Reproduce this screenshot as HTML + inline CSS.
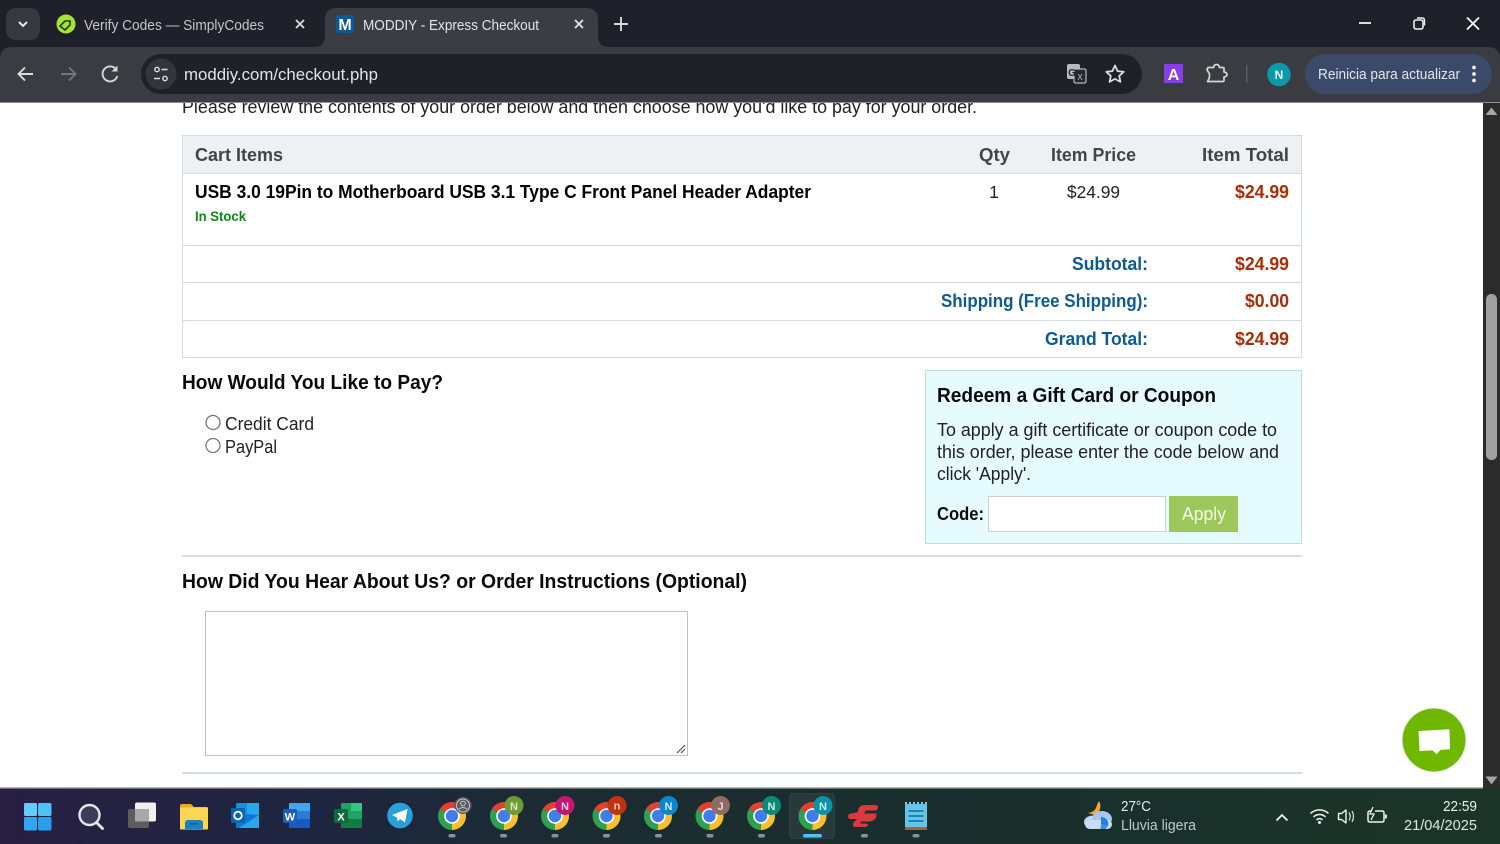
<!DOCTYPE html>
<html lang="en"><head><meta charset="utf-8"><title>MODDIY - Express Checkout</title>
<style>
html,body{margin:0;padding:0;width:1500px;height:844px;overflow:hidden;background:#fff}
svg{display:block;position:absolute;left:0;top:0}
text{font-family:"Liberation Sans","DejaVu Sans",sans-serif}
.s{font-family:"Liberation Sans","DejaVu Sans",sans-serif}
.b{font-weight:700}
</style></head><body>
<svg width="1500" height="844" viewBox="0 0 1500 844" xmlns="http://www.w3.org/2000/svg">
<defs>
<linearGradient id="tb" x1="0" x2="1" y1="0" y2="0"><stop offset="0" stop-color="#281f42"/><stop offset=".2" stop-color="#1e2540"/><stop offset=".4" stop-color="#1b2c30"/><stop offset=".7" stop-color="#1a2f2c"/><stop offset="1" stop-color="#1b3427"/></linearGradient>
<symbol id="chrome" viewBox="0 0 28 28" overflow="visible">
<path d="M14 14L1.880 7A14 14 0 0 1 26.120 7Z" fill="#e5402f"/>
<path d="M14 14L26.120 7A14 14 0 0 1 14 28Z" fill="#f9c02e"/>
<path d="M14 14L14 28A14 14 0 0 1 1.880 7Z" fill="#2fa04f"/>
<circle cx="14" cy="14" r="7.800" fill="#fff"/><circle cx="14" cy="14" r="6.200" fill="#3f7ee8"/>
</symbol>
</defs>

<!-- browser tab strip -->
<rect width="1500" height="62" fill="#1f2029"/>
<rect x="6" y="8" width="34" height="32" rx="10" fill="#373840"/>
<path d="M19 22l4 4 4-4" fill="none" stroke="#e6e6e8" stroke-width="2"/>
<circle cx="66" cy="24" r="9.500" fill="#a3e635"/>
<path d="M60 26l5-5h5v4l-5 5z" fill="none" stroke="#2c3a10" stroke-width="1.600"/>
<text x="84" y="30" font-size="15" fill="#c5c6ca" textLength="180" lengthAdjust="spacingAndGlyphs">Verify Codes — SimplyCodes</text>
<path d="M296 20l8 8M304 20l-8 8" stroke="#d8d8dc" stroke-width="1.900"/>
<path d="M314 47q11 0 11-11V20q0-12 12-12h249q12 0 12 12v16q0 11 11 11z" fill="#3c3d44"/>
<rect x="336" y="15" width="18" height="18" rx="2" fill="#0a5a9c"/>
<text x="345" y="30" font-size="16" class="b" fill="#fff" text-anchor="middle">M</text>
<text x="363" y="30" font-size="15" fill="#e4e4e6" textLength="176" lengthAdjust="spacingAndGlyphs">MODDIY - Express Checkout</text>
<path d="M575 20l8 8M583 20l-8 8" stroke="#e4e4e6" stroke-width="1.900"/>
<path d="M621 17v14M614 24h14" stroke="#d8d8dc" stroke-width="1.900"/>
<path d="M1359 23h12" stroke="#f2f2f2" stroke-width="1.800"/>
<rect x="1414" y="20" width="9" height="9" rx="2" fill="none" stroke="#f2f2f2" stroke-width="1.600"/>
<path d="M1417 18h5q2.500 0 2.500 2.500v5" fill="none" stroke="#f2f2f2" stroke-width="1.400"/>
<path d="M1467 17.500l12 12M1479 17.500l-12 12" stroke="#f5f5f5" stroke-width="1.800"/>

<!-- toolbar -->
<path d="M0 102V59q0-12 12-12h1476q12 0 12 12v43z" fill="#3b3c41"/>
<rect y="102" width="1500" height="1" fill="#8d8f92"/>
<path d="M19 74h14M25 67.500l-6.500 6.500 6.500 6.500" fill="none" stroke="#dedee0" stroke-width="1.900"/>
<path d="M61 74h14M69 67.500l6.500 6.500-6.500 6.500" fill="none" stroke="#75767a" stroke-width="1.900"/>
<path d="M116.500 70a7.500 7.500 0 1 0 .8 6" fill="none" stroke="#d6d6d8" stroke-width="1.900"/><path d="M117.500 65.500v6h-6z" fill="#d6d6d8"/>
<rect x="141" y="54" width="1001" height="40" rx="20" fill="#1f2028"/>
<circle cx="161" cy="74" r="15.500" fill="#34353c"/>
<circle cx="157" cy="69.500" r="2.200" fill="none" stroke="#dedee0" stroke-width="1.400"/><path d="M161.500 69.500h6M154 78.500h6" stroke="#dedee0" stroke-width="1.500"/><circle cx="165" cy="78.500" r="2.200" fill="none" stroke="#dedee0" stroke-width="1.400"/>
<text x="184" y="80" font-size="17" fill="#e3e3e5" textLength="194" lengthAdjust="spacingAndGlyphs">moddiy.com/checkout.php</text>
<rect x="1067" y="64" width="13" height="15" rx="2" fill="#b9babc"/>
<rect x="1074" y="69" width="12" height="14" rx="1.500" fill="#26272e" stroke="#b9babc" stroke-width="1.200"/>
<text x="1072" y="76" font-size="10" class="b" fill="#26272e" text-anchor="middle">G</text>
<text x="1080" y="80" font-size="8" fill="#c8c8ca" text-anchor="middle">X</text>
<path d="M1115 65.500l2.600 5.600 6.100.7-4.500 4.100 1.200 6-5.400-3-5.400 3 1.200-6-4.500-4.100 6.100-.7z" fill="none" stroke="#dcdcde" stroke-width="1.800" stroke-linejoin="round"/>
<rect x="1164" y="64" width="19" height="19" fill="#8a3ce6"/>
<text x="1173.500" y="80" font-size="16" class="b" fill="#fff" text-anchor="middle">A</text>
<path d="M1208 67.500h5.500q.5-3 3-3t3 3h3.500q1 0 1 1v3.500q3 .5 3 2.500t-3 2.500v3.500q0 1-1 1h-15.500l1.500-3q.5-1 .5-2.500v-1.500q0-1-.8-2l-1.700-2.500z" fill="none" stroke="#d6d6d8" stroke-width="1.700" stroke-linejoin="round"/>
<rect x="1246" y="65" width="1.500" height="18" fill="#5b5c60"/>
<circle cx="1279" cy="74.500" r="11.800" fill="#0c99a9"/>
<text x="1279" y="79" font-size="12" class="b" fill="#e8f8fa" text-anchor="middle">N</text>
<rect x="1305" y="54" width="187" height="40" rx="20" fill="#3b4a68"/>
<text x="1318" y="79" font-size="14.500" fill="#e2e5ec" textLength="142" lengthAdjust="spacingAndGlyphs">Reinicia para actualizar</text>
<circle cx="1474" cy="67.500" r="1.900" fill="#eee"/><circle cx="1474" cy="74" r="1.900" fill="#eee"/><circle cx="1474" cy="80.500" r="1.900" fill="#eee"/>

<!-- page content -->
<svg x="0" y="103" width="1483" height="685" viewBox="0 103 1483 685">
<rect x="0" y="103" width="1483" height="685" fill="#fff"/>
<text x="182" y="113" font-size="18" fill="#222" class="s" textLength="795" lengthAdjust="spacingAndGlyphs">Please review the contents of your order below and then choose how you'd like to pay for your order.</text>

<rect x="182.500" y="135.500" width="1119" height="222" fill="#fff" stroke="#d2dbdd"/>
<rect x="183" y="136" width="1118" height="37" fill="#eef1f3"/>
<path d="M183 173.500h1118M183 245.500h1118M183 282.500h1118M183 320.500h1118" stroke="#d2dbdd"/>
<g font-size="18.500" fill="#444">
<text x="195" y="161" class="s b" textLength="88" lengthAdjust="spacingAndGlyphs">Cart Items</text>
<text x="979" y="161" class="s b" textLength="31" lengthAdjust="spacingAndGlyphs">Qty</text>
<text x="1051" y="161" class="s b" textLength="85" lengthAdjust="spacingAndGlyphs">Item Price</text>
<text x="1202" y="161" class="s b" textLength="87" lengthAdjust="spacingAndGlyphs">Item Total</text>
</g>
<text x="195" y="198" font-size="18.500" class="s b" fill="#000" textLength="616" lengthAdjust="spacingAndGlyphs">USB 3.0 19Pin to Motherboard USB 3.1 Type C Front Panel Header Adapter</text>
<text x="195" y="221" font-size="14" class="s b" fill="#0b8a12" textLength="51" lengthAdjust="spacingAndGlyphs">In Stock</text>
<text x="994" y="198" font-size="17.500" class="s" fill="#222" text-anchor="middle">1</text>
<text x="1067" y="198" font-size="17.500" class="s" fill="#222" textLength="53" lengthAdjust="spacingAndGlyphs">$24.99</text>
<g fill="#ab2c06">
<text x="1235" y="198" font-size="18.500" class="s b" textLength="54" lengthAdjust="spacingAndGlyphs">$24.99</text>
<text x="1235" y="270" font-size="18.500" class="s b" textLength="54" lengthAdjust="spacingAndGlyphs">$24.99</text>
<text x="1245" y="307" font-size="18.500" class="s b" textLength="44" lengthAdjust="spacingAndGlyphs">$0.00</text>
<text x="1235" y="345" font-size="18.500" class="s b" textLength="54" lengthAdjust="spacingAndGlyphs">$24.99</text>
</g>
<g fill="#0e5a94">
<text x="1072" y="270" font-size="18.500" class="s b" textLength="76" lengthAdjust="spacingAndGlyphs">Subtotal:</text>
<text x="941" y="307" font-size="18.500" class="s b" textLength="207" lengthAdjust="spacingAndGlyphs">Shipping (Free Shipping):</text>
<text x="1045" y="345" font-size="18.500" class="s b" textLength="103" lengthAdjust="spacingAndGlyphs">Grand Total:</text>
</g>

<text x="182" y="389" font-size="20" class="s b" fill="#0a0a0a" textLength="261" lengthAdjust="spacingAndGlyphs">How Would You Like to Pay?</text>
<circle cx="213" cy="422.500" r="7" fill="#fff" stroke="#767676" stroke-width="1.300"/>
<circle cx="213" cy="445.500" r="7" fill="#fff" stroke="#767676" stroke-width="1.300"/>
<text x="225" y="430" font-size="18.500" class="s" fill="#222" textLength="89" lengthAdjust="spacingAndGlyphs">Credit Card</text>
<text x="225" y="453" font-size="18.500" class="s" fill="#222" textLength="52" lengthAdjust="spacingAndGlyphs">PayPal</text>

<rect x="925.500" y="370.500" width="376" height="173" fill="#e5fbfe" stroke="#bcdfe3"/>
<text x="937" y="402" font-size="20" class="s b" fill="#0a0a0a" textLength="279" lengthAdjust="spacingAndGlyphs">Redeem a Gift Card or Coupon</text>
<text x="937" y="436" font-size="18.500" class="s" fill="#222" textLength="340" lengthAdjust="spacingAndGlyphs">To apply a gift certificate or coupon code to</text>
<text x="937" y="458" font-size="18.500" class="s" fill="#222" textLength="342" lengthAdjust="spacingAndGlyphs">this order, please enter the code below and</text>
<text x="937" y="480" font-size="18.500" class="s" fill="#222" textLength="94" lengthAdjust="spacingAndGlyphs">click 'Apply'.</text>
<text x="937" y="520" font-size="18.500" class="s b" fill="#0a0a0a" textLength="47" lengthAdjust="spacingAndGlyphs">Code:</text>
<rect x="988.500" y="496.500" width="177" height="35" fill="#fff" stroke="#c9d3d6"/>
<rect x="1169" y="496" width="69" height="36" fill="#9dc75b"/>
<text x="1182" y="520" font-size="18.500" class="s" fill="#f4fae9" textLength="44" lengthAdjust="spacingAndGlyphs">Apply</text>

<rect x="182" y="555" width="1120" height="2" fill="#d3dfdf"/>
<text x="182" y="588" font-size="20" class="s b" fill="#0a0a0a" textLength="565" lengthAdjust="spacingAndGlyphs">How Did You Hear About Us? or Order Instructions (Optional)</text>
<rect x="205.500" y="611.500" width="482" height="144" fill="#fff" stroke="#c0c4c6"/>
<path d="M677 753l8-8M681 753l4-4" stroke="#555" stroke-width="1.200"/>
<rect x="182" y="772" width="1120" height="2" fill="#d3dfdf"/>

<circle cx="1434" cy="740" r="33" fill="#000" opacity=".05"/>
<circle cx="1434" cy="740" r="31.500" fill="#70b800"/>
<path d="M1418.500 731l31-1.800 .5 20-9.500 .7-4 4.300-4-3.800-13 .6z" fill="#fff"/>
</svg>

<!-- scrollbar -->
<rect x="1483" y="103" width="17" height="685" fill="#2b2b2b"/>
<path d="M1491.500 107.500l6 7.500h-12z" fill="#a5a5a5"/>
<rect x="1486" y="294" width="11" height="166" rx="5" fill="#a0a0a0"/>
<path d="M1491.500 784.500l6-8h-12z" fill="#a5a5a5"/>

<!-- taskbar -->
<rect y="788" width="1500" height="56" fill="url(#tb)"/>
<rect y="787" width="1483" height="1.500" fill="#b7babb"/>

<!-- start -->
<rect x="24" y="803" width="13" height="13" rx="1.500" fill="#5fcdf9"/><rect x="38" y="803" width="13.500" height="13" rx="1.500" fill="#4cc2f7"/><rect x="24" y="817" width="13" height="13.500" rx="1.500" fill="#2fa8f0"/><rect x="38" y="817" width="13.500" height="13.500" rx="1.500" fill="#2a9eeb"/>
<!-- search -->
<circle cx="89.500" cy="815" r="10" fill="#3d3a5a" stroke="#e8e8ea" stroke-width="2.400"/><path d="M96.500 822.500l6 6" stroke="#e8e8ea" stroke-width="2.800" stroke-linecap="round"/>
<!-- task view -->
<rect x="128" y="809" width="21" height="19" rx="2" fill="#5d5d5f"/>
<rect x="135" y="802.500" width="21" height="19" rx="2" fill="#f0f0f0"/>
<rect x="135" y="809" width="14" height="12.500" fill="#a8a8aa"/>
<!-- folder -->
<path d="M180 806q0-2 2-2h9l3 3h13q1 0 1 2v19q0 1-1 1h-26q-1 0-1-1z" fill="#e8ad20"/>
<rect x="180" y="807.500" width="28" height="22" rx="1" fill="#fcd653"/>
<path d="M185 829v-6q0-3 3-3h12q3 0 3 3v6z" fill="#1f7fc4"/><rect x="190" y="823" width="8" height="1.500" fill="#0f5e96"/>
<!-- outlook -->
<rect x="236" y="803" width="23" height="25" rx="1.500" fill="#1490df"/>
<rect x="247" y="803" width="12" height="12" fill="#28a8ea"/>
<path d="M236 817l11-3 12 1v13h-23z" fill="#0f78d4"/>
<path d="M239 828l20-13v13z" fill="#28a8ea"/>
<rect x="231" y="808" width="14" height="15" rx="1.500" fill="#0a64b4"/>
<circle cx="238" cy="815.500" r="3.800" fill="none" stroke="#fff" stroke-width="1.800"/>
<!-- word -->
<rect x="289" y="803" width="21" height="25" rx="1.500" fill="#2b7cd3"/><rect x="289" y="803" width="21" height="8" fill="#41a5ee"/><rect x="289" y="819" width="21" height="9" fill="#185abd"/>
<rect x="283" y="809" width="14" height="14" rx="1.500" fill="#1b5eb8"/>
<text x="290" y="820.500" font-size="11" class="b" fill="#fff" text-anchor="middle">W</text>
<!-- excel -->
<rect x="341" y="803" width="21" height="25" rx="1.500" fill="#21a366"/><rect x="351" y="803" width="11" height="8" fill="#33c481"/><rect x="351" y="811" width="11" height="8" fill="#21a366"/><rect x="341" y="819" width="21" height="9" fill="#107c41"/>
<rect x="334" y="809" width="14" height="14" rx="1.500" fill="#0f6b3a"/>
<text x="341" y="820.500" font-size="11" class="b" fill="#fff" text-anchor="middle">X</text>
<!-- telegram -->
<circle cx="400" cy="815.500" r="12.800" fill="#2a9fd8"/>
<path d="M392 815l15.500-6-2.500 13.500-5-3.500-2.500 2.500-.5-4z" fill="#fff"/>

<!-- chrome icons -->
<use href="#chrome" x="438" y="802" width="28" height="28"/>
<circle cx="463" cy="805.500" r="8.500" fill="#5a5d60"/><circle cx="463" cy="805.500" r="6.500" fill="none" stroke="#c2c4c6" stroke-width="1"/><circle cx="463" cy="803.500" r="2.300" fill="none" stroke="#c2c4c6" stroke-width="1"/><path d="M459 809q4-3 8 0" fill="none" stroke="#c2c4c6"/>
<rect x="448.500" y="834" width="7" height="3.500" rx="1.700" fill="#8b9094"/>

<use href="#chrome" x="490" y="802" width="28" height="28"/>
<circle cx="514" cy="805.500" r="9.500" fill="#6d9c35"/><text x="514" y="810" font-size="11" class="b" fill="#dbe9c8" text-anchor="middle">N</text>
<rect x="500" y="834" width="7" height="3.500" rx="1.700" fill="#8b9094"/>

<use href="#chrome" x="541" y="802" width="28" height="28"/>
<circle cx="565" cy="805.500" r="9.500" fill="#c2186f"/><text x="565" y="810" font-size="11" class="b" fill="#f5d3e5" text-anchor="middle">N</text>
<rect x="551.500" y="834" width="7" height="3.500" rx="1.700" fill="#8b9094"/>

<use href="#chrome" x="592.500" y="802" width="28" height="28"/>
<circle cx="617" cy="805.500" r="9.500" fill="#bf3410"/><text x="617" y="809.500" font-size="11" class="b" fill="#f2c9bb" text-anchor="middle">n</text>
<rect x="603" y="834" width="7" height="3.500" rx="1.700" fill="#8b9094"/>

<use href="#chrome" x="644" y="802" width="28" height="28"/>
<circle cx="668.500" cy="805.500" r="9.500" fill="#0b85d0"/><text x="668.500" y="810" font-size="11" class="b" fill="#d5ebf8" text-anchor="middle">N</text>
<rect x="655" y="834" width="7" height="3.500" rx="1.700" fill="#8b9094"/>

<use href="#chrome" x="695.500" y="802" width="28" height="28"/>
<circle cx="720.500" cy="805.500" r="9.500" fill="#8f6b60"/><text x="720.500" y="810" font-size="11" class="b" fill="#e8dcd8" text-anchor="middle">J</text>
<rect x="706.500" y="834" width="7" height="3.500" rx="1.700" fill="#8b9094"/>

<use href="#chrome" x="747" y="802" width="28" height="28"/>
<circle cx="771.500" cy="805.500" r="9.500" fill="#0b8a7a"/><text x="771.500" y="810" font-size="11" class="b" fill="#cfeae6" text-anchor="middle">N</text>
<rect x="758" y="834" width="7" height="3.500" rx="1.700" fill="#8b9094"/>

<rect x="789.500" y="793.500" width="45" height="45" rx="4" fill="#27393a" stroke="#2f4142"/>
<use href="#chrome" x="798.500" y="802" width="28" height="28"/>
<circle cx="823" cy="805.500" r="9.500" fill="#0b93a8"/><text x="823" y="810" font-size="11" class="b" fill="#d2eef2" text-anchor="middle">N</text>
<rect x="803" y="834" width="19" height="3.500" rx="1.700" fill="#4cc2f7"/>

<!-- red app icon -->
<path d="M858 812q0-7 7-7h10q3 0 3 2.500t-3 3h-9l-2 3h12q1 1 0 4-2 4-7 4h-8l-1 2h5q3 0 3 1.500t-3 2h-9q-3 0-3-2t1-3l3-3h-6q-3 0-3-2.500t3-3z" fill="#da3940"/>
<rect x="861" y="834" width="7" height="3.500" rx="1.700" fill="#8b9094"/>
<!-- notepad -->
<rect x="905" y="804" width="22" height="25" fill="#62c6ea"/><rect x="905" y="827" width="22" height="3" fill="#a5642e"/>
<path d="M906 804v-2M910 804v-2M914 804v-2M918 804v-2M922 804v-2M926 804v-2" stroke="#cfeff9" stroke-width="1.500"/>
<path d="M908.500 811h15M908.500 816h15M908.500 821h15" stroke="#0f6d96" stroke-width="1.500"/>
<rect x="912.500" y="834" width="7" height="3.500" rx="1.700" fill="#8b9094"/>

<!-- weather -->
<path d="M1099 801a10 10 0 0 1-4 14l-7-2q6-1 8-5 1-4 3-7z" fill="#f0a83c"/>
<ellipse cx="1093" cy="822" rx="9" ry="6.500" fill="#bcd6f4"/>
<ellipse cx="1102" cy="819" rx="10" ry="8" fill="#a9c6ee"/>
<rect x="1085" y="820" width="27" height="9" rx="4.500" fill="#c7dcf6"/>
<path d="M1101 817a7 7 0 0 1 7 9l-7-2z" fill="#1f7fe6"/><path d="M1101 824l7 2-2.500 3h-5z" fill="#3a92ee"/>
<text x="1121" y="811" font-size="14.500" fill="#e6ebe8" textLength="30" lengthAdjust="spacingAndGlyphs">27°C</text>
<text x="1121" y="830" font-size="14.500" fill="#c2cbc7" textLength="75" lengthAdjust="spacingAndGlyphs">Lluvia ligera</text>

<!-- tray -->
<path d="M1276.500 820.500l5.500-5.500 5.500 5.500" fill="none" stroke="#f2f2f2" stroke-width="1.800"/>
<path d="M1310.500 813.500a13 13 0 0 1 18 0M1313.500 817a8.500 8.500 0 0 1 12 0M1316.500 820a4 4 0 0 1 6 0" fill="none" stroke="#eef2f0" stroke-width="1.500"/><circle cx="1319.500" cy="822.500" r="1.500" fill="#eef2f0"/>
<path d="M1338.500 813.500h3l4.500-3.500v13l-4.500-3.500h-3z" fill="none" stroke="#eef2f0" stroke-width="1.400" stroke-linejoin="round"/>
<path d="M1349 812.500q2.500 4 0 8M1352 811q3 5.500 0 11" fill="none" stroke="#dfe5e2" stroke-width="1.200"/>
<path d="M1371 811h-1q-2 0-2 2v7q0 2 2 2h12q2 0 2-2v-7q0-2-2-2h-7" fill="none" stroke="#eef2f0" stroke-width="1.500"/><rect x="1385" y="814.500" width="1.800" height="4" fill="#eef2f0"/><path d="M1373 807l-3 7h4l-3 6" fill="none" stroke="#eef2f0" stroke-width="1.300"/>

<text x="1477" y="811" font-size="14.500" fill="#eef2f0" text-anchor="end" textLength="34" lengthAdjust="spacingAndGlyphs">22:59</text>
<text x="1477" y="830" font-size="14.500" fill="#dfe6e2" text-anchor="end" textLength="73" lengthAdjust="spacingAndGlyphs">21/04/2025</text>
</svg>
</body></html>
